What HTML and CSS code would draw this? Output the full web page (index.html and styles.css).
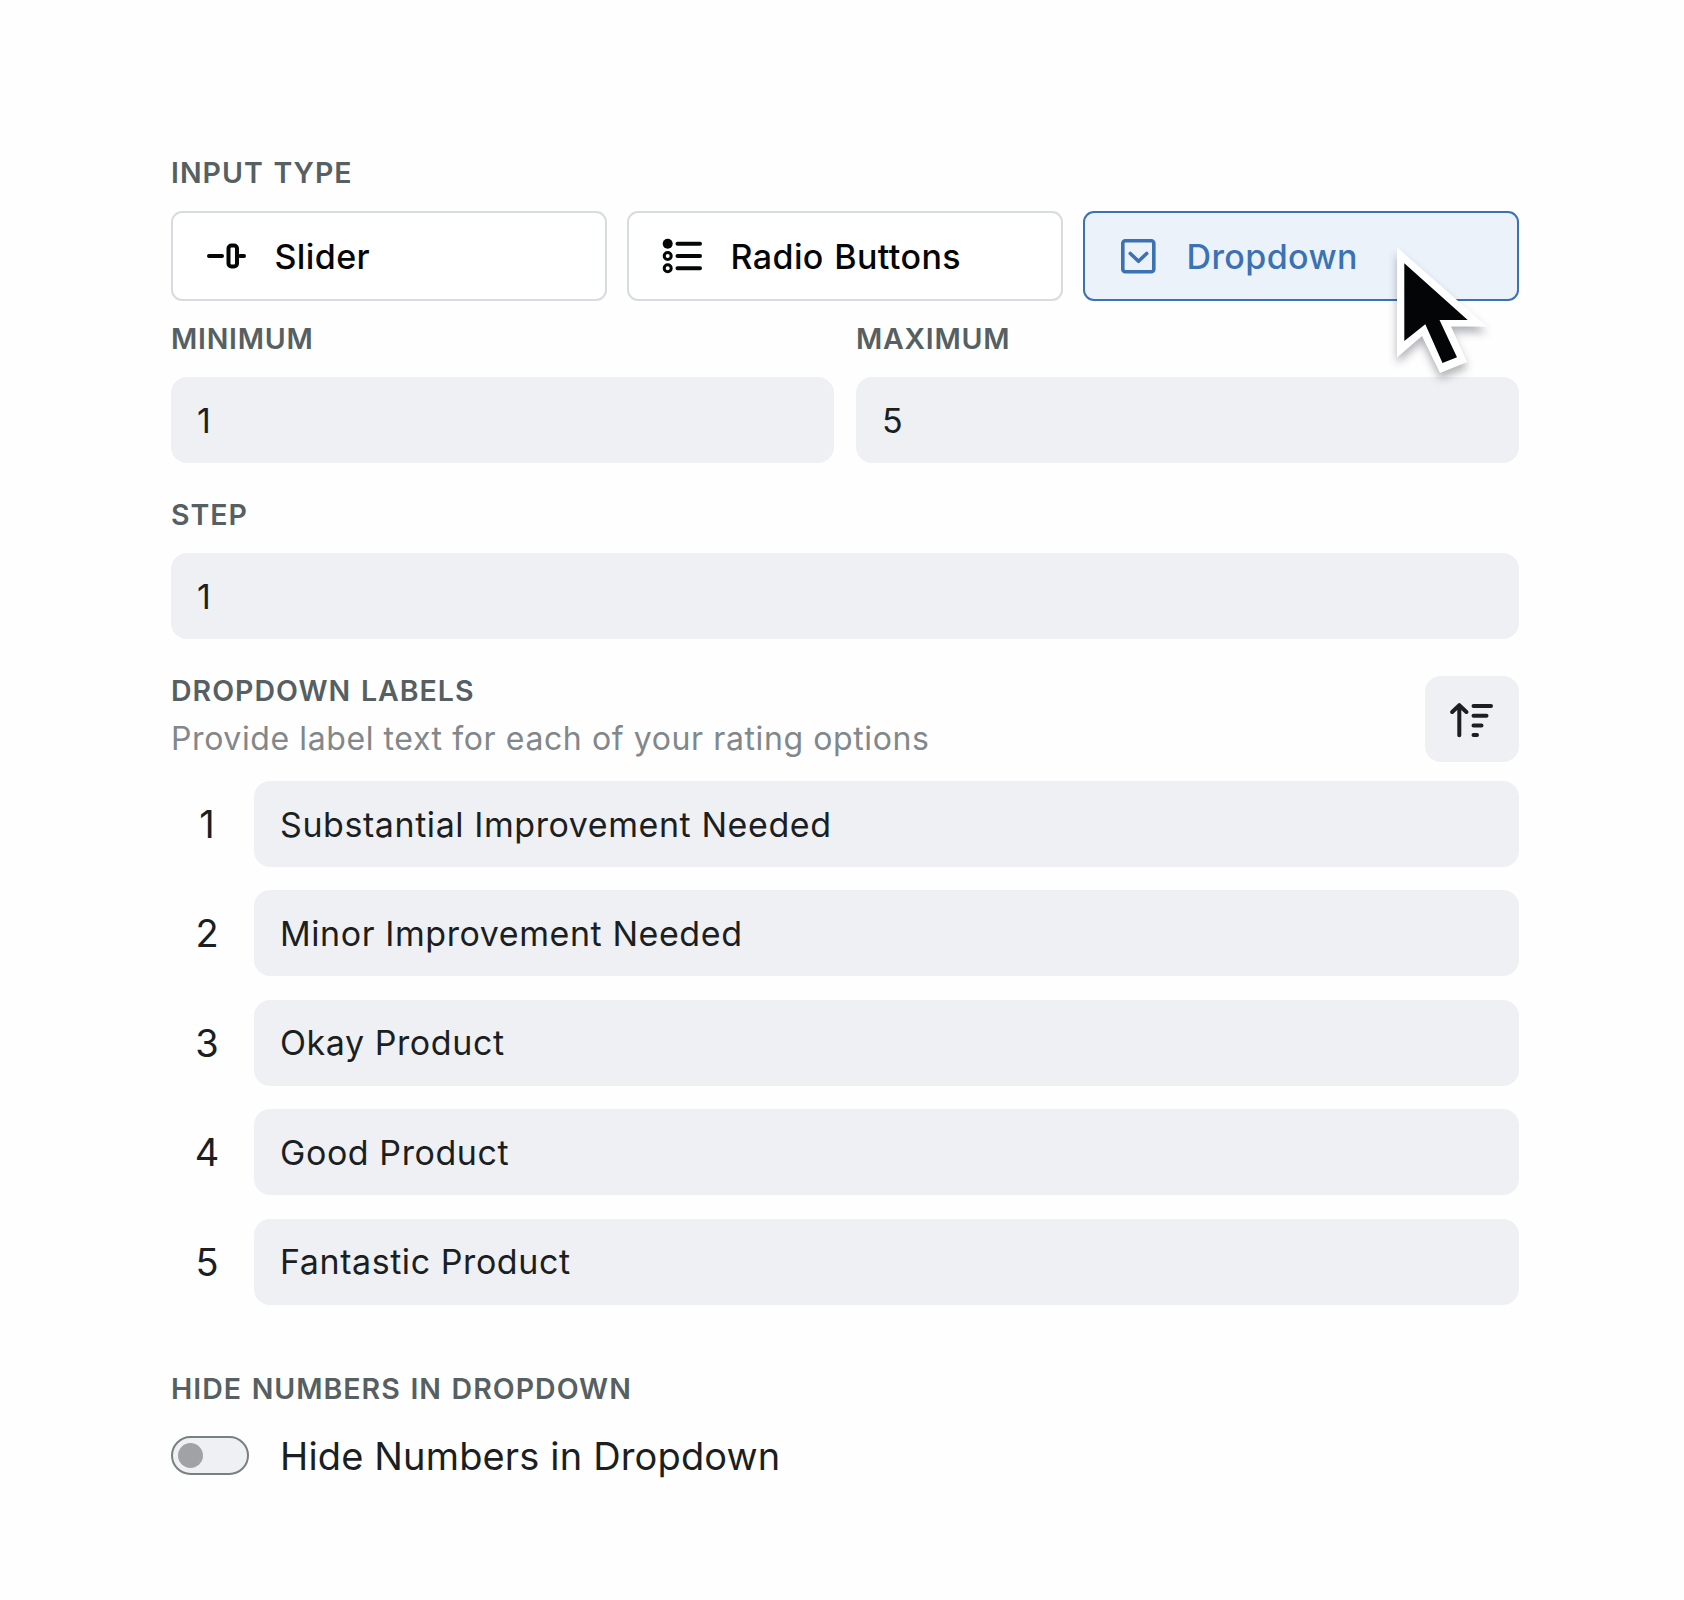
FILE: index.html
```html
<!doctype html>
<html lang="en">
    <head>
        <meta charset="UTF-8" />
        <meta name="viewport" content="width=device-width, initial-scale=1.0" />
        <title>Rating settings</title>
        <link rel="stylesheet" href="styles.css">
    </head>
    <body>
        <main class="settings">
            <h2 class="label">Input Type</h2>
            <div class="types">
                <button class="type">
                    <svg class="type-icon" viewBox="0 0 40 40" fill="none" stroke="currentColor" stroke-width="4" stroke-linecap="round">
                        <path d="M3 20h13M34 20h4" />
                        <rect x="22.5" y="9.5" width="8.5" height="21" rx="3" />
                    </svg>
                    Slider
                </button>
                <button class="type">
                    <svg class="type-icon" viewBox="0 0 40 40" fill="none" stroke="currentColor" stroke-width="4" stroke-linecap="round">
                        <path d="M15.5 7.7H38M15.5 20H38M15.5 32.3H38" />
                        <circle cx="5.7" cy="7.7" r="5" fill="currentColor" stroke="none" />
                        <circle cx="5.7" cy="20" r="3.5" stroke-width="3" />
                        <circle cx="5.7" cy="32.3" r="3.5" stroke-width="3" />
                    </svg>
                    Radio Buttons
                </button>
                <button class="type active">
                    <svg class="type-icon" viewBox="0 0 40 40" fill="none" stroke="currentColor" stroke-width="3.6" stroke-linecap="round" stroke-linejoin="round">
                        <rect x="4.8" y="4.7" width="31" height="31" rx="2.5" />
                        <path d="M12.3 17.5l8.2 7.8 8.2-7.8" />
                    </svg>
                    Dropdown
                </button>

                <svg class="cursor" width="110" height="150" viewBox="0 0 110 150">
                    <path d="M7 7.3L97 86.5H61L77.3 122 50 133 32 96 7 117.5z" fill="#fff" />
                    <path d="M14.3 23.3L77.7 80H49.5L67 117.3 52.5 123 35.3 84.3 14.3 101z" fill="#040506" />
                </svg>
            </div>

            <div class="range">
                <div class="field">
                    <label class="label" for="min">Minimum</label>
                    <input class="input" id="min" type="text" value="1" />
                </div>
                <div class="field">
                    <label class="label" for="max">Maximum</label>
                    <input class="input" id="max" type="text" value="5" />
                </div>
            </div>

            <div class="field step">
                <label class="label" for="step">Step</label>
                <input class="input" id="step" type="text" value="1" />
            </div>

            <div class="labels-header">
                <div>
                    <h2 class="label">Dropdown Labels</h2>
                    <p class="hint">Provide label text for each of your rating options</p>
                </div>
                <button class="sort" aria-label="Reverse order">
                    <svg width="44" height="38" viewBox="0 -0.7 44 38" fill="none" stroke="currentColor" stroke-width="4" stroke-linecap="round" stroke-linejoin="round">
                        <path d="M9.3 34.5V4.5M2.2 11.3l7.1-6.8 7.1 6.8" />
                        <path d="M23.5 5.2H41M23.5 15H36.5M23.5 24.7H31.5M23.5 34.4H27" />
                    </svg>
                </button>
            </div>

            <div class="rows">
                <div class="row">
                    <span class="row-number">1</span>
                    <input class="input" type="text" value="Substantial Improvement Needed" />
                </div>
                <div class="row">
                    <span class="row-number">2</span>
                    <input class="input" type="text" value="Minor Improvement Needed" />
                </div>
                <div class="row">
                    <span class="row-number">3</span>
                    <input class="input" type="text" value="Okay Product" />
                </div>
                <div class="row">
                    <span class="row-number">4</span>
                    <input class="input" type="text" value="Good Product" />
                </div>
                <div class="row">
                    <span class="row-number">5</span>
                    <input class="input" type="text" value="Fantastic Product" />
                </div>
            </div>

            <h2 class="label">Hide Numbers in Dropdown</h2>
            <label class="toggle">
                <input class="toggle-input" type="checkbox" />
                <span class="track"></span>
                <span class="toggle-text">Hide Numbers in Dropdown</span>
            </label>
        </main>
    </body>
</html>
```
FILE: styles.css
```css
:root {
    --text: #1b1f22;
    --label: #565f61;
    --hint: #81878a;
    --field: #eff0f4;
    --border: #d8dbdf;
    --accent: #3a72b3;
    --accent-bg: #ecf2fa;
}

* {
    box-sizing: border-box;
    margin: 0;
}

body {
    font-family: Inter, "Liberation Sans", sans-serif;
    color: var(--text);
    background: #fefefe;
}

.settings {
    width: 1684px;
    min-height: 1600px;
    padding: 156px 165px 0 171px;
}

.label {
    display: block;
    margin-bottom: 21px;
    font-size: 28.5px;
    font-weight: 600;
    line-height: 34px;
    letter-spacing: 1px;
    word-spacing: 1.5px;
    text-transform: uppercase;
    white-space: nowrap;
    color: var(--label);
}

button,
input {
    font: inherit;
    color: inherit;
}

.types {
    position: relative;
    display: grid;
    grid-template-columns: repeat(3, 1fr);
    gap: 20px;
    margin-bottom: 21px;
}

.type {
    display: flex;
    align-items: center;
    gap: 28.5px;
    height: 90px;
    padding: 0 33px;
    font-size: 34px;
    font-weight: 500;
    letter-spacing: 0.4px;
    word-spacing: 1px;
    color: #050607;
    background: #fff;
    border: 2px solid var(--border);
    border-radius: 11px;
}

.type.active {
    color: var(--accent);
    background: var(--accent-bg);
    border-color: var(--accent);
}

.type-icon {
    flex: none;
    width: 40px;
    height: 40px;
}

/* pointer resting on the selected type */
.cursor {
    position: absolute;
    top: 29px;
    left: 1219px;
    filter: drop-shadow(0 6px 4px rgba(20, 22, 40, 0.32));
    pointer-events: none;
}

.range {
    display: grid;
    grid-template-columns: 1fr 1fr;
    gap: 22px;
    margin-bottom: 35px;
}

.range .label {
    letter-spacing: 0.75px;
}

.step {
    margin-bottom: 35px;
}

.input {
    display: block;
    width: 100%;
    height: 86px;
    padding: 0 26px;
    font-size: 34px;
    letter-spacing: 0.57px;
    background: var(--field);
    border: none;
    border-radius: 16px;
    outline: none;
}

.labels-header {
    display: flex;
    justify-content: space-between;
    align-items: flex-end;
    height: 88px;
    margin-bottom: 19px;
}

.labels-header .label {
    margin-bottom: 11px;
}

.hint {
    padding-bottom: 3px;
    font-size: 32px;
    line-height: 40px;
    letter-spacing: 0.6px;
    color: var(--hint);
}

.sort {
    display: grid;
    place-items: center;
    width: 94px;
    height: 86px;
    padding: 0;
    background: var(--field);
    border: none;
    border-radius: 16px;
}

.rows {
    display: grid;
    gap: 23.4px;
    margin-bottom: 67.4px;
}

.row {
    display: grid;
    grid-template-columns: 72px 1fr;
    column-gap: 11px;
    align-items: center;
}

.row-number {
    font-size: 38px;
    text-align: center;
}

.toggle {
    display: flex;
    align-items: center;
    gap: 31px;
    margin-top: 30px;
    height: 40px;
}

.toggle-input {
    display: none;
}

.track {
    width: 78px;
    height: 39px;
    padding: 5px;
    background: var(--field);
    border: 2px solid #798082;
    border-radius: 20px;
}

.track::before {
    content: "";
    display: block;
    width: 25px;
    height: 25px;
    border-radius: 50%;
    background: #a0a3a6;
}

.toggle-input:checked + .track::before {
    margin-left: auto;
    background: var(--accent);
}

.toggle-text {
    font-size: 38px;
    line-height: 40px;
    letter-spacing: 0.15px;
}
```
